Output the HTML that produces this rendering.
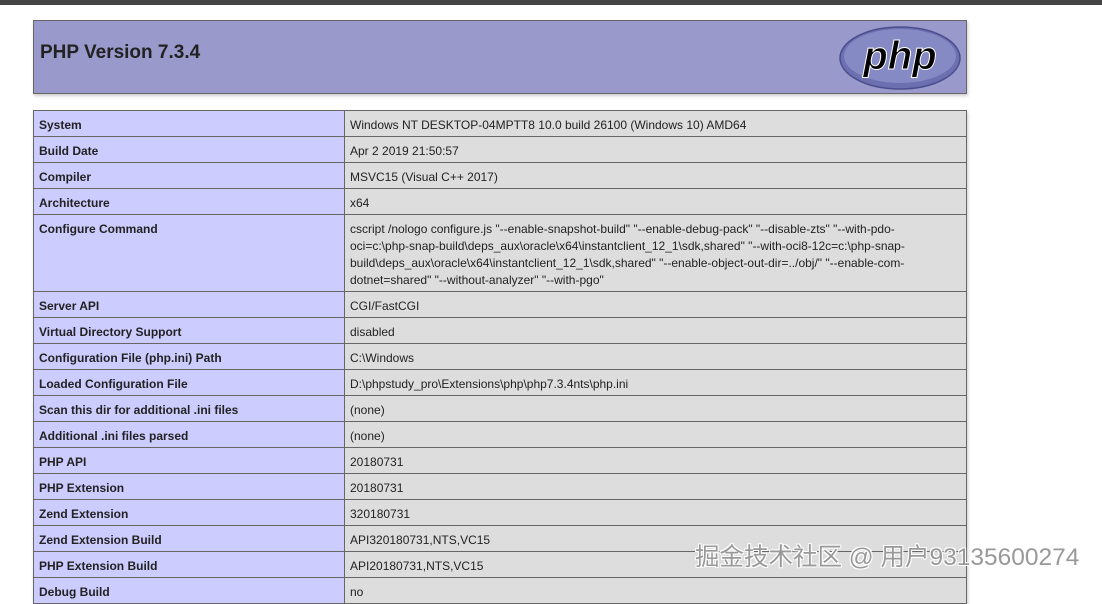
<!DOCTYPE html>
<html><head><meta charset="utf-8"><style>
body{margin:0;background:#fff;width:1102px;height:587px;overflow:hidden;position:relative;font-family:"Liberation Sans","Noto Sans CJK SC",sans-serif;color:#222}
.top{position:absolute;left:0;top:0;width:1102px;height:5px;background:#444}
.hdr{position:absolute;left:33px;top:20px;width:932px;height:72px;background:#9999cc;border:1px solid #666;box-shadow:1px 2px 3px #ccc}
.hdr h1{margin:0;position:absolute;left:6px;top:21px;font-size:19px;font-weight:bold;color:#222}
table{position:absolute;left:33px;top:110px;width:934px;border-collapse:collapse;font-size:12px;box-shadow:1px 2px 3px #ccc}
td{border:1px solid #666;padding:6px 5px 2px 5px;line-height:17px;vertical-align:top}
td.e{background:#ccccff;font-weight:bold;width:300px}
td.v{background:#ddd}
.wm{position:absolute;left:695px;top:538px;font-size:24.5px;color:#999;text-shadow:1px 1px 0 #fff,-1px -1px 0 #fff,1px -1px 0 #fff,-1px 1px 0 #fff;white-space:nowrap;font-family:"Liberation Sans","Noto Sans CJK SC",sans-serif}
</style></head><body>
<div class="top"></div>
<div class="hdr"><h1>PHP Version 7.3.4</h1>
<svg style="position:absolute;left:805px;top:4px" width="122" height="66" viewBox="0 0 122 66">
<ellipse cx="61" cy="33" rx="60" ry="31" fill="#6c6fb0" stroke="#4b4e8c" stroke-width="1.5"/>
<ellipse cx="61" cy="31" rx="56" ry="27" fill="#8589c4"/>
<text x="61" y="44" text-anchor="middle" font-family="Liberation Sans,sans-serif" font-style="italic" font-weight="bold" font-size="40" fill="#000" stroke="#fff" stroke-width="1">php</text>
</svg></div>
<table>
<tr><td class="e">System</td><td class="v">Windows NT DESKTOP-04MPTT8 10.0 build 26100 (Windows 10) AMD64</td></tr>
<tr><td class="e">Build Date</td><td class="v">Apr 2 2019 21:50:57</td></tr>
<tr><td class="e">Compiler</td><td class="v">MSVC15 (Visual C++ 2017)</td></tr>
<tr><td class="e">Architecture</td><td class="v">x64</td></tr>
<tr><td class="e">Configure Command</td><td class="v">cscript /nologo configure.js "--enable-snapshot-build" "--enable-debug-pack" "--disable-zts" "--with-pdo-<br>oci=c:\php-snap-build\deps_aux\oracle\x64\instantclient_12_1\sdk,shared" "--with-oci8-12c=c:\php-snap-<br>build\deps_aux\oracle\x64\instantclient_12_1\sdk,shared" "--enable-object-out-dir=../obj/" "--enable-com-<br>dotnet=shared" "--without-analyzer" "--with-pgo"</td></tr>
<tr><td class="e">Server API</td><td class="v">CGI/FastCGI</td></tr>
<tr><td class="e">Virtual Directory Support</td><td class="v">disabled</td></tr>
<tr><td class="e">Configuration File (php.ini) Path</td><td class="v">C:\Windows</td></tr>
<tr><td class="e">Loaded Configuration File</td><td class="v">D:\phpstudy_pro\Extensions\php\php7.3.4nts\php.ini</td></tr>
<tr><td class="e">Scan this dir for additional .ini files</td><td class="v">(none)</td></tr>
<tr><td class="e">Additional .ini files parsed</td><td class="v">(none)</td></tr>
<tr><td class="e">PHP API</td><td class="v">20180731</td></tr>
<tr><td class="e">PHP Extension</td><td class="v">20180731</td></tr>
<tr><td class="e">Zend Extension</td><td class="v">320180731</td></tr>
<tr><td class="e">Zend Extension Build</td><td class="v">API320180731,NTS,VC15</td></tr>
<tr><td class="e">PHP Extension Build</td><td class="v">API20180731,NTS,VC15</td></tr>
<tr><td class="e">Debug Build</td><td class="v">no</td></tr>
</table>
<div class="wm">掘金技术社区 @ 用户9313560027​4</div>
</body></html>
